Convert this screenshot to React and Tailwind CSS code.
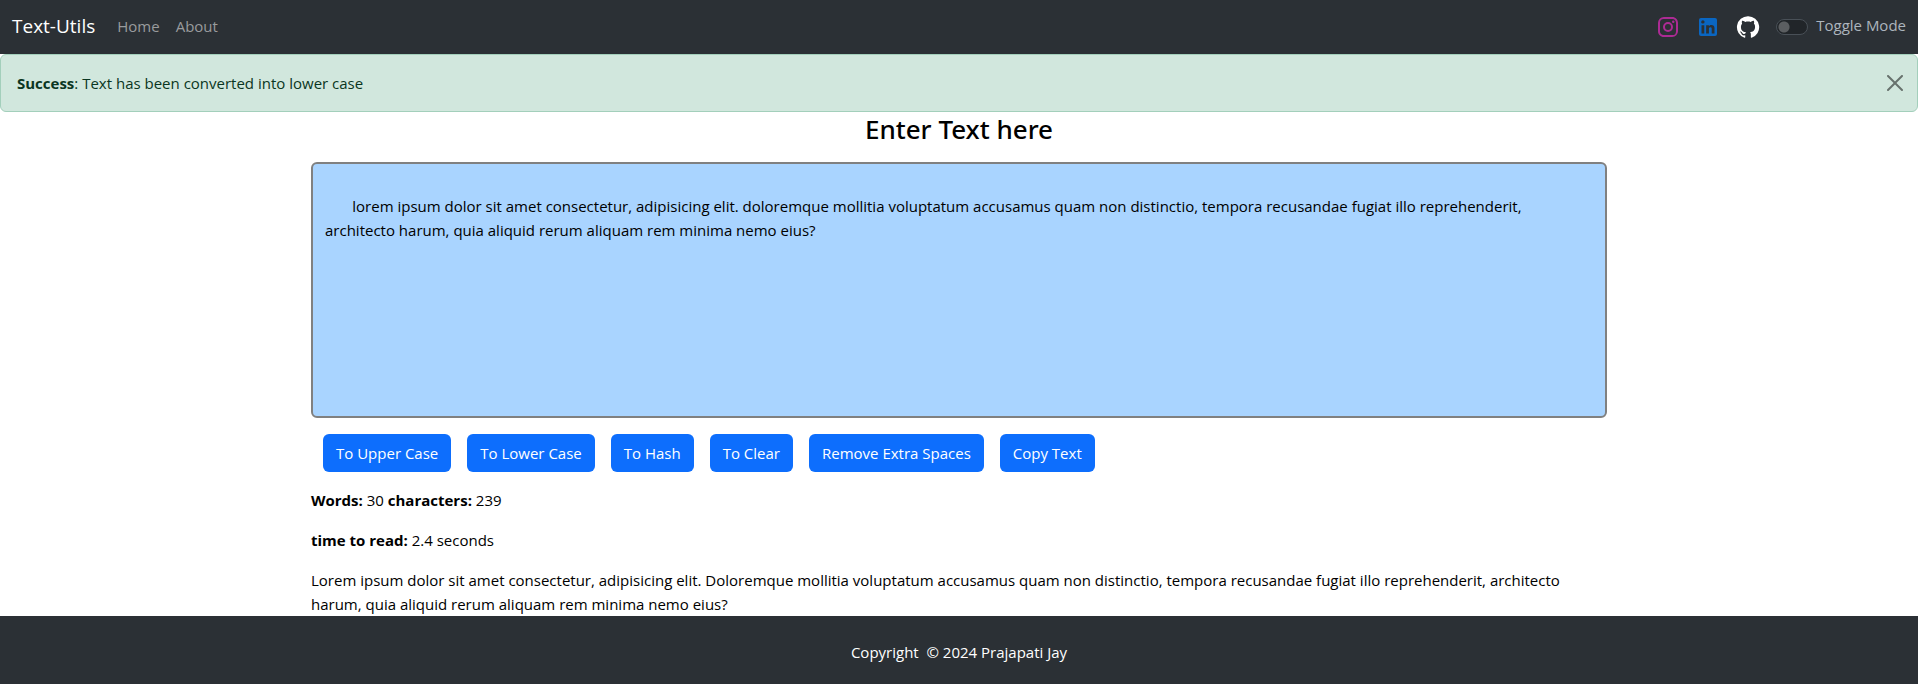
import { useState } from "react";

const lowerText =
  "\n       lorem ipsum dolor sit amet consectetur, adipisicing elit. doloremque mollitia voluptatum accusamus quam non distinctio, tempora recusandae fugiat illo reprehenderit, architecto harum, quia aliquid rerum aliquam rem minima nemo eius?";

const actions = [
  "To Upper Case",
  "To Lower Case",
  "To Hash",
  "To Clear",
  "Remove Extra Spaces",
  "Copy Text",
];

const socials = [
  {
    name: "Instagram",
    color: "text-[#ac2b94]",
    path: "M7.8 2h8.4C19.4 2 22 4.6 22 7.8v8.4a5.8 5.8 0 0 1-5.8 5.8H7.8C4.6 22 2 19.4 2 16.2V7.8A5.8 5.8 0 0 1 7.8 2m-.2 2A3.6 3.6 0 0 0 4 7.6v8.8C4 18.39 5.61 20 7.6 20h8.8a3.6 3.6 0 0 0 3.6-3.6V7.6C20 5.61 18.39 4 16.4 4H7.6m9.65 1.5a1.25 1.25 0 0 1 1.25 1.25A1.25 1.25 0 0 1 17.25 8 1.25 1.25 0 0 1 16 6.75a1.25 1.25 0 0 1 1.25-1.25M12 7a5 5 0 0 1 5 5 5 5 0 0 1-5 5 5 5 0 0 1-5-5 5 5 0 0 1 5-5m0 2a3 3 0 0 0-3 3 3 3 0 0 0 3 3 3 3 0 0 0 3-3 3 3 0 0 0-3-3z",
  },
  {
    name: "LinkedIn",
    color: "text-[#0a66c2]",
    path: "M19 3a2 2 0 0 1 2 2v14a2 2 0 0 1-2 2H5a2 2 0 0 1-2-2V5a2 2 0 0 1 2-2h14m-.5 15.5v-5.3a3.26 3.26 0 0 0-3.26-3.26c-.85 0-1.84.52-2.32 1.3v-1.11h-2.79v8.37h2.79v-4.93c0-.77.62-1.4 1.39-1.4a1.4 1.4 0 0 1 1.4 1.4v4.93h2.79M6.88 8.56a1.68 1.68 0 0 0 1.68-1.68c0-.93-.75-1.69-1.68-1.69a1.69 1.69 0 0 0-1.69 1.69c0 .93.76 1.68 1.69 1.68m1.39 9.94v-8.37H5.5v8.37h2.77z",
  },
  {
    name: "GitHub",
    color: "text-white",
    path: "M12 1.27a11 11 0 0 0-3.48 21.46c.55.09.73-.28.73-.55v-1.84c-3.03.64-3.67-1.46-3.67-1.46-.55-1.29-1.28-1.65-1.28-1.65-.92-.65.1-.65.1-.65 1.1 0 1.73 1.1 1.73 1.1.92 1.65 2.57 1.2 3.21.92a2 2 0 0 1 .64-1.47c-2.47-.27-5.04-1.19-5.04-5.5 0-1.1.46-2.1 1.2-2.84a3.76 3.76 0 0 1 0-2.93s.91-.28 3.11 1.1c1.8-.49 3.7-.49 5.5 0 2.1-1.38 3.02-1.1 3.02-1.1a3.76 3.76 0 0 1 .1 2.93c.83.74 1.2 1.74 1.2 2.94 0 4.21-2.57 5.13-5.04 5.4.45.37.82.92.82 2.02v3.03c0 .27.1.64.73.55A11 11 0 0 0 12 1.27",
  },
];

function Navbar() {
  return (
    <nav className="flex h-[54px] items-center justify-between bg-[#2b3035] px-3">
      <div className="flex items-center gap-[22px] pb-0.5">
        <a href="#" className="text-[19px] leading-[30px] text-white">
          Text-Utils
        </a>
        <div className="flex gap-4 text-[15px] leading-6 text-[#999b9d]">
          <a href="#home">Home</a>
          <a href="#about">About</a>
        </div>
      </div>
      <div className="flex items-center gap-4">
        {socials.map(({ name, color, path }) => (
          <a key={name} href={`#${name}`} aria-label={name} className={color}>
            <svg viewBox="0 0 24 24" className="size-6 fill-current">
              <path d={path} />
            </svg>
          </a>
        ))}
        <label htmlFor="mode" className="flex items-start gap-2 pb-1 text-[15px] leading-6 text-[#adb5bd]">
          <input
            id="mode"
            type="checkbox"
            role="switch"
            className="mt-[6px] h-4 w-8 appearance-none rounded-full border border-[#495057] bg-[#212529] bg-[radial-gradient(circle_at_7px_7px,#5b5e61_5px,transparent_6px)]"
          />
          Toggle Mode
        </label>
      </div>
    </nav>
  );
}

function Alert() {
  return (
    <div
      role="alert"
      className="flex items-center justify-between rounded-md border border-[#a3cfbb] bg-[#d1e7dd] py-4 pr-[14px] pl-4 text-[15px] leading-6 text-[#0a3622]"
    >
      <p>
        <strong className="font-bold">Success</strong>: Text has been converted into lower case
      </p>
      <button type="button" aria-label="Close" className="opacity-50">
        <svg viewBox="0 0 16 16" className="size-4 fill-black">
          <path d="M.293.293a1 1 0 0 1 1.414 0L8 6.586 14.293.293a1 1 0 1 1 1.414 1.414L9.414 8l6.293 6.293a1 1 0 0 1-1.414 1.414L8 9.414l-6.293 6.293a1 1 0 0 1-1.414-1.414L6.586 8 .293 1.707a1 1 0 0 1 0-1.414z" />
        </svg>
      </button>
    </div>
  );
}

export default function App() {
  const [text, setText] = useState(lowerText);
  return (
    <div className="flex min-h-screen flex-col bg-white font-['Open_Sans','Noto_Sans',sans-serif] text-black">
      <Navbar />
      <Alert />
      <main className="mx-auto w-full max-w-[1320px] px-3 text-[15px] leading-6">
        <h1 className="text-center font-['Noto_Sans',sans-serif] text-[26px] leading-[34px] font-medium">
          <label htmlFor="box">Enter Text here</label>
        </h1>
        <textarea
          id="box"
          rows={10}
          value={text}
          onChange={(e) => setText(e.target.value)}
          className="mt-4 block w-full resize-none rounded-md border-2 border-[#808080] bg-[#a9d4ff] px-3 py-[6px]"
        />
        <div className="mt-4 flex flex-wrap gap-4 px-3">
          {actions.map((name) => (
            <button key={name} type="button" className="rounded-md bg-[#0d6efd] px-[13px] py-[7px] text-white">
              {name}
            </button>
          ))}
        </div>
        <p className="mt-4">
          <b>Words:</b> 30 <b>characters:</b> 239
        </p>
        <p className="mt-4">
          <b>time to read:</b> 2.4 seconds
        </p>
        <p className="mt-4">
          Lorem ipsum dolor sit amet consectetur, adipisicing elit. Doloremque mollitia voluptatum accusamus quam non
          distinctio, tempora recusandae fugiat illo reprehenderit, architecto harum, quia aliquid rerum aliquam rem
          minima nemo eius?
        </p>
      </main>
      <footer className="grow bg-[#2b3035] pt-6 pb-4 text-center text-[15px] leading-6 text-white">
        Copyright &nbsp;© 2024 Prajapati Jay
      </footer>
    </div>
  );
}
